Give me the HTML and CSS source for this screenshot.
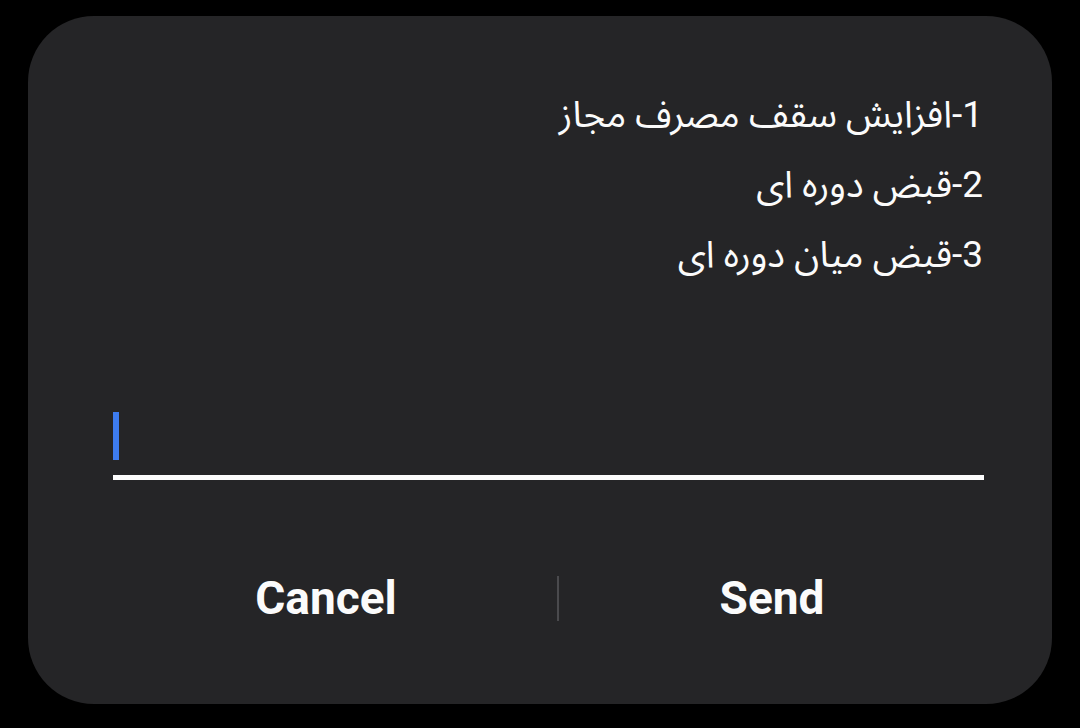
FILE: index.html
```html
<!DOCTYPE html>
<html lang="fa">
<head>
<meta charset="utf-8">
<title>Dialog</title>
<link rel="stylesheet" href="styles.css">
</head>
<body>
<div class="dialog">
  <div class="message" dir="rtl">
    <p class="line">1-افزایش سقف مصرف مجاز</p>
    <p class="line">2-قبض دوره ای</p>
    <p class="line">3-قبض میان دوره ای</p>
  </div>
  <div class="field"><span class="caret"></span></div>
  <div class="actions">
    <div class="btn">Cancel</div>
    <div class="divider"></div>
    <div class="btn">Send</div>
  </div>
</div>
</body>
</html>
```
FILE: styles.css
```css
html, body {
  margin: 0;
  padding: 0;
  background: #000;
}
body {
  width: 1080px;
  height: 728px;
  overflow: hidden;
  font-family: Roboto, "Noto Sans Arabic", "DejaVu Sans", sans-serif;
}
.dialog {
  box-sizing: border-box;
  margin: 16px 0 0 28px;
  width: 1024px;
  height: 688px;
  border-radius: 66px;
  background: #252527;
  padding: 64px 68px 0 85px;
}
.message {
  padding-right: 1px;
  color: #fbfbfb;
  font-size: 37px;
  line-height: 70px;
}
.line {
  margin: 0;
  text-align: right;
}
.field {
  margin-top: 122px;
  padding-bottom: 15px;
  border-bottom: 5px solid #fdfdfd;
  display: flex;
}
.caret {
  width: 6px;
  height: 48px;
  background: #3d7cf0;
}
.actions {
  margin: 96px -1px 0 -18px;
  display: grid;
  grid-template-columns: 462px 2px 1fr;
  align-items: center;
}
.btn {
  text-align: center;
  color: #fbfbfb;
  font-weight: 700;
  font-size: 46px;
  line-height: 45px;
}
.divider {
  height: 45px;
  background: #4a4a4d;
}
```
